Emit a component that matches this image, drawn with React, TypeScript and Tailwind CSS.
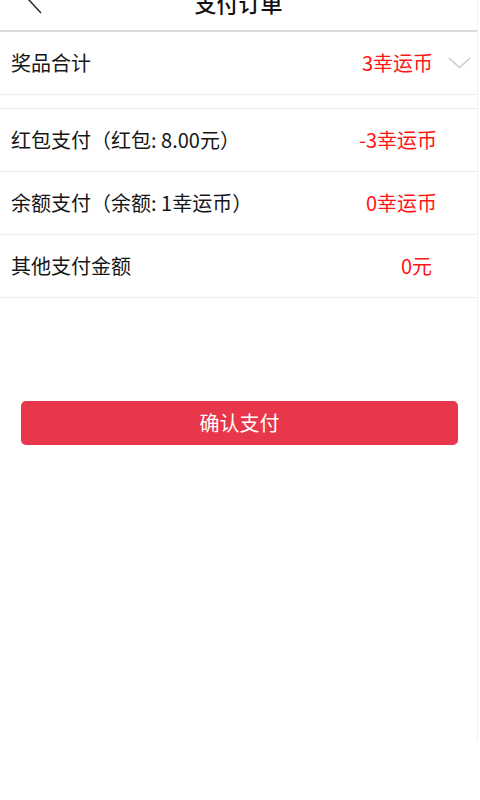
import React from "react";

const Row = ({ label, value, pr }: { label: string; value: string; pr: string }) => (
  <div className={`flex h-[63px] items-center justify-between border-b border-[#ececf1] pl-[11px] ${pr}`}>
    <span className="text-[20px] text-[#161616]">{label}</span>
    <span className="text-[20px] text-[#ff1414]">{value}</span>
  </div>
);

export default function App() {
  return (
    <div
      className="min-h-[800px] w-[480px] bg-white"
      style={{ fontFamily: '"Noto Sans CJK SC", "Noto Sans", sans-serif' }}
    >
      <div className="w-[478px] border-r border-[#efefef] pb-[296px]">
        <div className="-mt-[26px] flex h-[58px] items-center justify-center relative border-b-2 border-[#dadada]">
          <svg className="absolute left-[26px] top-[12px]" width="18" height="28" viewBox="0 0 18 28" fill="none">
            <path d="M15 1 L3 14 L15 27" stroke="#333" strokeWidth="1.6" />
          </svg>
          <span className="text-[22px] font-medium text-[#111]">支付订单</span>
        </div>
        <div className="flex h-[63px] items-center justify-between border-b border-[#ececf1] pl-[11px] pr-[6px]">
          <span className="text-[20px] text-[#161616]">奖品合计</span>
          <div className="flex items-center gap-[15px]">
            <span className="text-[20px] text-[#ff1414]">3幸运币</span>
            <svg width="23" height="12" viewBox="0 0 23 12" fill="none">
              <path d="M1 1 L11.5 10.5 L22 1" stroke="#c8c8c8" strokeWidth="1.3" />
            </svg>
          </div>
        </div>
        <div className="h-[14px] border-b border-[#ececf1]" />
        <Row label="红包支付（红包: 8.00元）" value="-3幸运币" pr="pr-[40px]" />
        <Row label="余额支付（余额: 1幸运币）" value="0幸运币" pr="pr-[40px]" />
        <Row label="其他支付金额" value="0元" pr="pr-[45px]" />
        <div className="mt-[103px] pl-[21px] pr-[19px]">
          <button className="flex h-[44px] w-full items-center justify-center rounded-[5px] bg-[#e8374a] text-[20px] text-white">
            确认支付
          </button>
        </div>
      </div>
    </div>
  );
}
